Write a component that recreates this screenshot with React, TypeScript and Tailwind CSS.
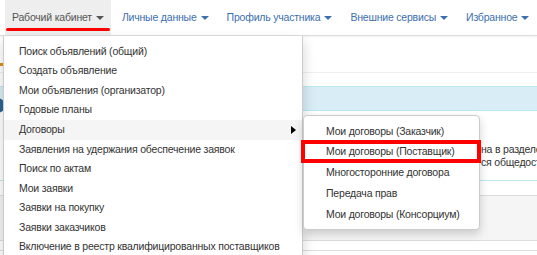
import React from 'react';

const Caret = () => (
  <span className="inline-block w-0 h-0 border-x-[4px] border-x-transparent border-t-[4px] border-t-current ml-[4px] mt-[1px]" />
);

const NavItem = ({ label, active }: { label: string; active?: boolean }) => (
  <div
    className={
      'relative flex items-center h-[35px] px-[7px] whitespace-nowrap ' +
      (active ? 'bg-[#eeeeee] text-[#555555]' : 'text-[#3b6fae]')
    }
  >
    <span>{label}</span>
    <Caret />
    {active && (
      <span className="absolute left-[1px] right-[1px] top-[28px] h-[3px] rounded-full bg-[#ff0000]" />
    )}
  </div>
);

const App = () => {
  const navItems = ['Личные данные', 'Профиль участника', 'Внешние сервисы', 'Избранное'];

  const menu = [
    'Поиск объявлений (общий)',
    'Создать объявление',
    'Мои объявления (организатор)',
    'Годовые планы',
    'Договоры',
    'Заявления на удержания обеспечение заявок',
    'Поиск по актам',
    'Мои заявки',
    'Заявки на покупку',
    'Заявки заказчиков',
    'Включение в реестр квалифицированных поставщиков',
  ];

  const submenu = [
    'Мои договоры (Заказчик)',
    'Мои договоры (Поставщик)',
    'Многосторонние договора',
    'Передача прав',
    'Мои договоры (Консорциум)',
  ];

  return (
    <div className="relative w-[537px] h-[255px] overflow-hidden bg-white text-[10.5px] tracking-[-0.2px] font-['Liberation_Sans',Arial,sans-serif]">
      {/* navbar */}
      <nav className="flex items-start gap-[4px] pl-[5px] h-[36px] border-b border-[#dddddd] shadow-[0_1px_2px_rgba(0,0,0,0.06)]">
        <NavItem label="Рабочий кабинет" active />
        {navItems.map((n) => (
          <NavItem key={n} label={n} />
        ))}
      </nav>

      {/* page content behind menus */}
      <div className="flex flex-col">
        <div className="h-[37px] border-b border-[#eeeeee] flex items-end pb-[6px]">
          <span className="-ml-[4px] w-[8px] h-[3px] bg-[#e08e0b]" />
        </div>
        <div className="h-[13px]" />
        <div className="border-y border-[#bce8f1]">
          <div className="h-[24px] bg-[#d9edf7] border-b border-[#bce8f1] flex items-center">
            <span className="-ml-[10px] w-[15px] h-[15px] rounded-full bg-[#2a6496] mt-[14px]" />
          </div>
          <div className="h-[69px] pt-[32px] text-[#333333] leading-[13px]">
            <div className="ml-[481px] whitespace-nowrap">на в разделе</div>
            <div className="ml-[481px] whitespace-nowrap">ся общедост</div>
          </div>
        </div>
        <div className="h-[14px]" />
        <div className="h-[46px] bg-[#f5f5f5] border-y border-[#dddddd]" />
        <div className="h-[9px]" />
        <div className="border-t border-[#dddddd]" />
      </div>

      {/* main dropdown */}
      <div className="absolute left-[3px] top-[36px] w-[300px] bg-white border border-[#cccccc] border-t-0 shadow-[0_6px_12px_rgba(0,0,0,0.175)] pt-[6px] pb-[4px] text-[#333333]">
        {menu.map((m) => (
          <div
            key={m}
            className={
              'relative flex items-center pl-[15px] whitespace-nowrap ' +
              (m === 'Договоры' ? 'bg-[#f5f5f5] h-[20px]' : 'h-[19.5px]')
            }
          >
            {m}
            {m === 'Договоры' && (
              <span className="absolute right-[6px] top-[6px] w-0 h-0 border-y-[4px] border-y-transparent border-l-[5px] border-l-[#000000]" />
            )}
          </div>
        ))}
      </div>

      {/* submenu */}
      <div className="absolute left-[303px] top-[115px] w-[177px] bg-white border border-[#cccccc] rounded-[4px] shadow-[0_4px_10px_rgba(0,0,0,0.175)] pt-[5px] pb-[4px] text-[#333333]">
        {submenu.map((s) => (
          <div key={s} className="h-[20.8px] flex items-center pl-[22px] whitespace-nowrap">
            {s}
          </div>
        ))}
      </div>

      {/* highlight */}
      <div className="absolute left-[301px] top-[140px] w-[180px] h-[23px] border-[4px] border-[#ff0000]" />
    </div>
  );
};

export default App;
